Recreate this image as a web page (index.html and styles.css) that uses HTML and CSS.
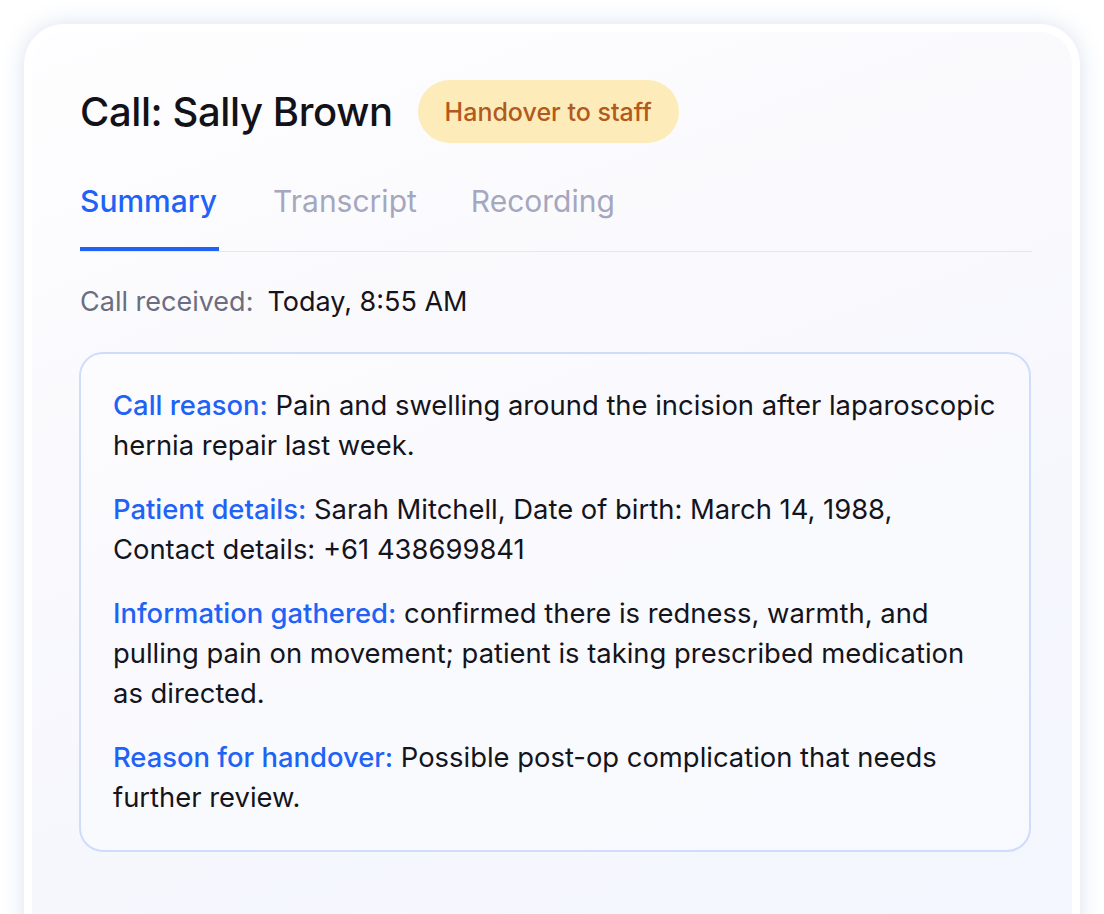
FILE: index.html
```html
<!DOCTYPE html>
<html lang="en">
<head>
<meta charset="utf-8">
<title>Call: Sally Brown</title>
<link rel="stylesheet" href="styles.css">
</head>
<body>
<div class="card">
  <div class="card-inner">
    <div class="header">
      <h1 class="title">Call: Sally Brown</h1>
      <span class="badge">Handover to staff</span>
    </div>
    <nav class="tabs">
      <a class="tab active">Summary</a>
      <a class="tab">Transcript</a>
      <a class="tab">Recording</a>
    </nav>
    <div class="received">
      <span class="received-label">Call received:</span>
      <span class="received-value">Today, 8:55 AM</span>
    </div>
    <div class="summary">
      <p><span class="label">Call reason:</span> Pain and swelling around the incision after laparoscopic hernia repair last week.</p>
      <p><span class="label">Patient details:</span> Sarah Mitchell, Date of birth: March 14, 1988, Contact details: +61 438699841</p>
      <p><span class="label">Information gathered:</span> confirmed there is redness, warmth, and pulling pain on movement; patient is taking prescribed medication as directed.</p>
      <p><span class="label">Reason for handover:</span> Possible post-op complication that needs further review.</p>
    </div>
  </div>
</div>
</body>
</html>
```
FILE: styles.css
```css
* { box-sizing: border-box; }
html, body { margin: 0; padding: 0; }
body {
  background: #ffffff;
  font-family: Inter, "Noto Sans", sans-serif;
  color: #14141c;
  padding: 24px 24px 0 24px;
  height: 914px;
  overflow: hidden;
}
.card {
  background: #ffffff;
  border-radius: 40px;
  padding: 8px;
  box-shadow: 0 0 22px rgba(120, 150, 200, 0.28);
  height: 960px;
}
.card-inner {
  height: 100%;
  border-radius: 32px;
  background: linear-gradient(160deg, #fefeff 0%, #f8f8fd 45%, #f3f6ff 100%);
  padding: 48px 40px 0 47px;
}
.header {
  display: flex;
  align-items: center;
  gap: 25px;
  padding-left: 1px;
}
.title {
  margin: 0;
  font-size: 40px;
  font-weight: 550;
  letter-spacing: -0.4px;
  line-height: 63px;
  color: #121218;
}
.badge {
  display: inline-flex;
  align-items: center;
  height: 63px;
  padding: 0 27px;
  border-radius: 32px;
  background: #fdecb9;
  color: #b25a1c;
  font-size: 25px;
  font-weight: 500;
}
.tabs {
  display: flex;
  gap: 54px;
  margin-top: 40px;
  margin-left: 1px;
  border-bottom: 1.5px solid #e6e7ee;
}
.tab {
  font-size: 30px;
  line-height: 36px;
  padding-bottom: 28px;
  color: #a4a7bd;
  border-bottom: 4px solid transparent;
}
.tab.active {
  color: #1f63f6;
  font-weight: 500;
  border-bottom-color: #1f63f6;
  padding-right: 2px;
}
.received {
  margin-top: 33px;
  padding-left: 1px;
  font-size: 27px;
  line-height: 34px;
  display: flex;
  gap: 14px;
}
.received-label { color: #6b6d80; }
.received-value { color: #14141c; }
.summary {
  margin-top: 33px;
  margin-right: 1px;
  border: 2px solid #cfdcfb;
  border-radius: 24px;
  padding: 31px 32px 33px 32px;
  background: rgba(255, 255, 255, 0.35);
}
.summary p {
  margin: 0 0 24px 0;
  font-size: 27.4px;
  line-height: 40px;
  color: #14141c;
}
.summary p:last-child { margin-bottom: 0; }
.label {
  color: #1f63f6;
  font-weight: 500;
}
```
